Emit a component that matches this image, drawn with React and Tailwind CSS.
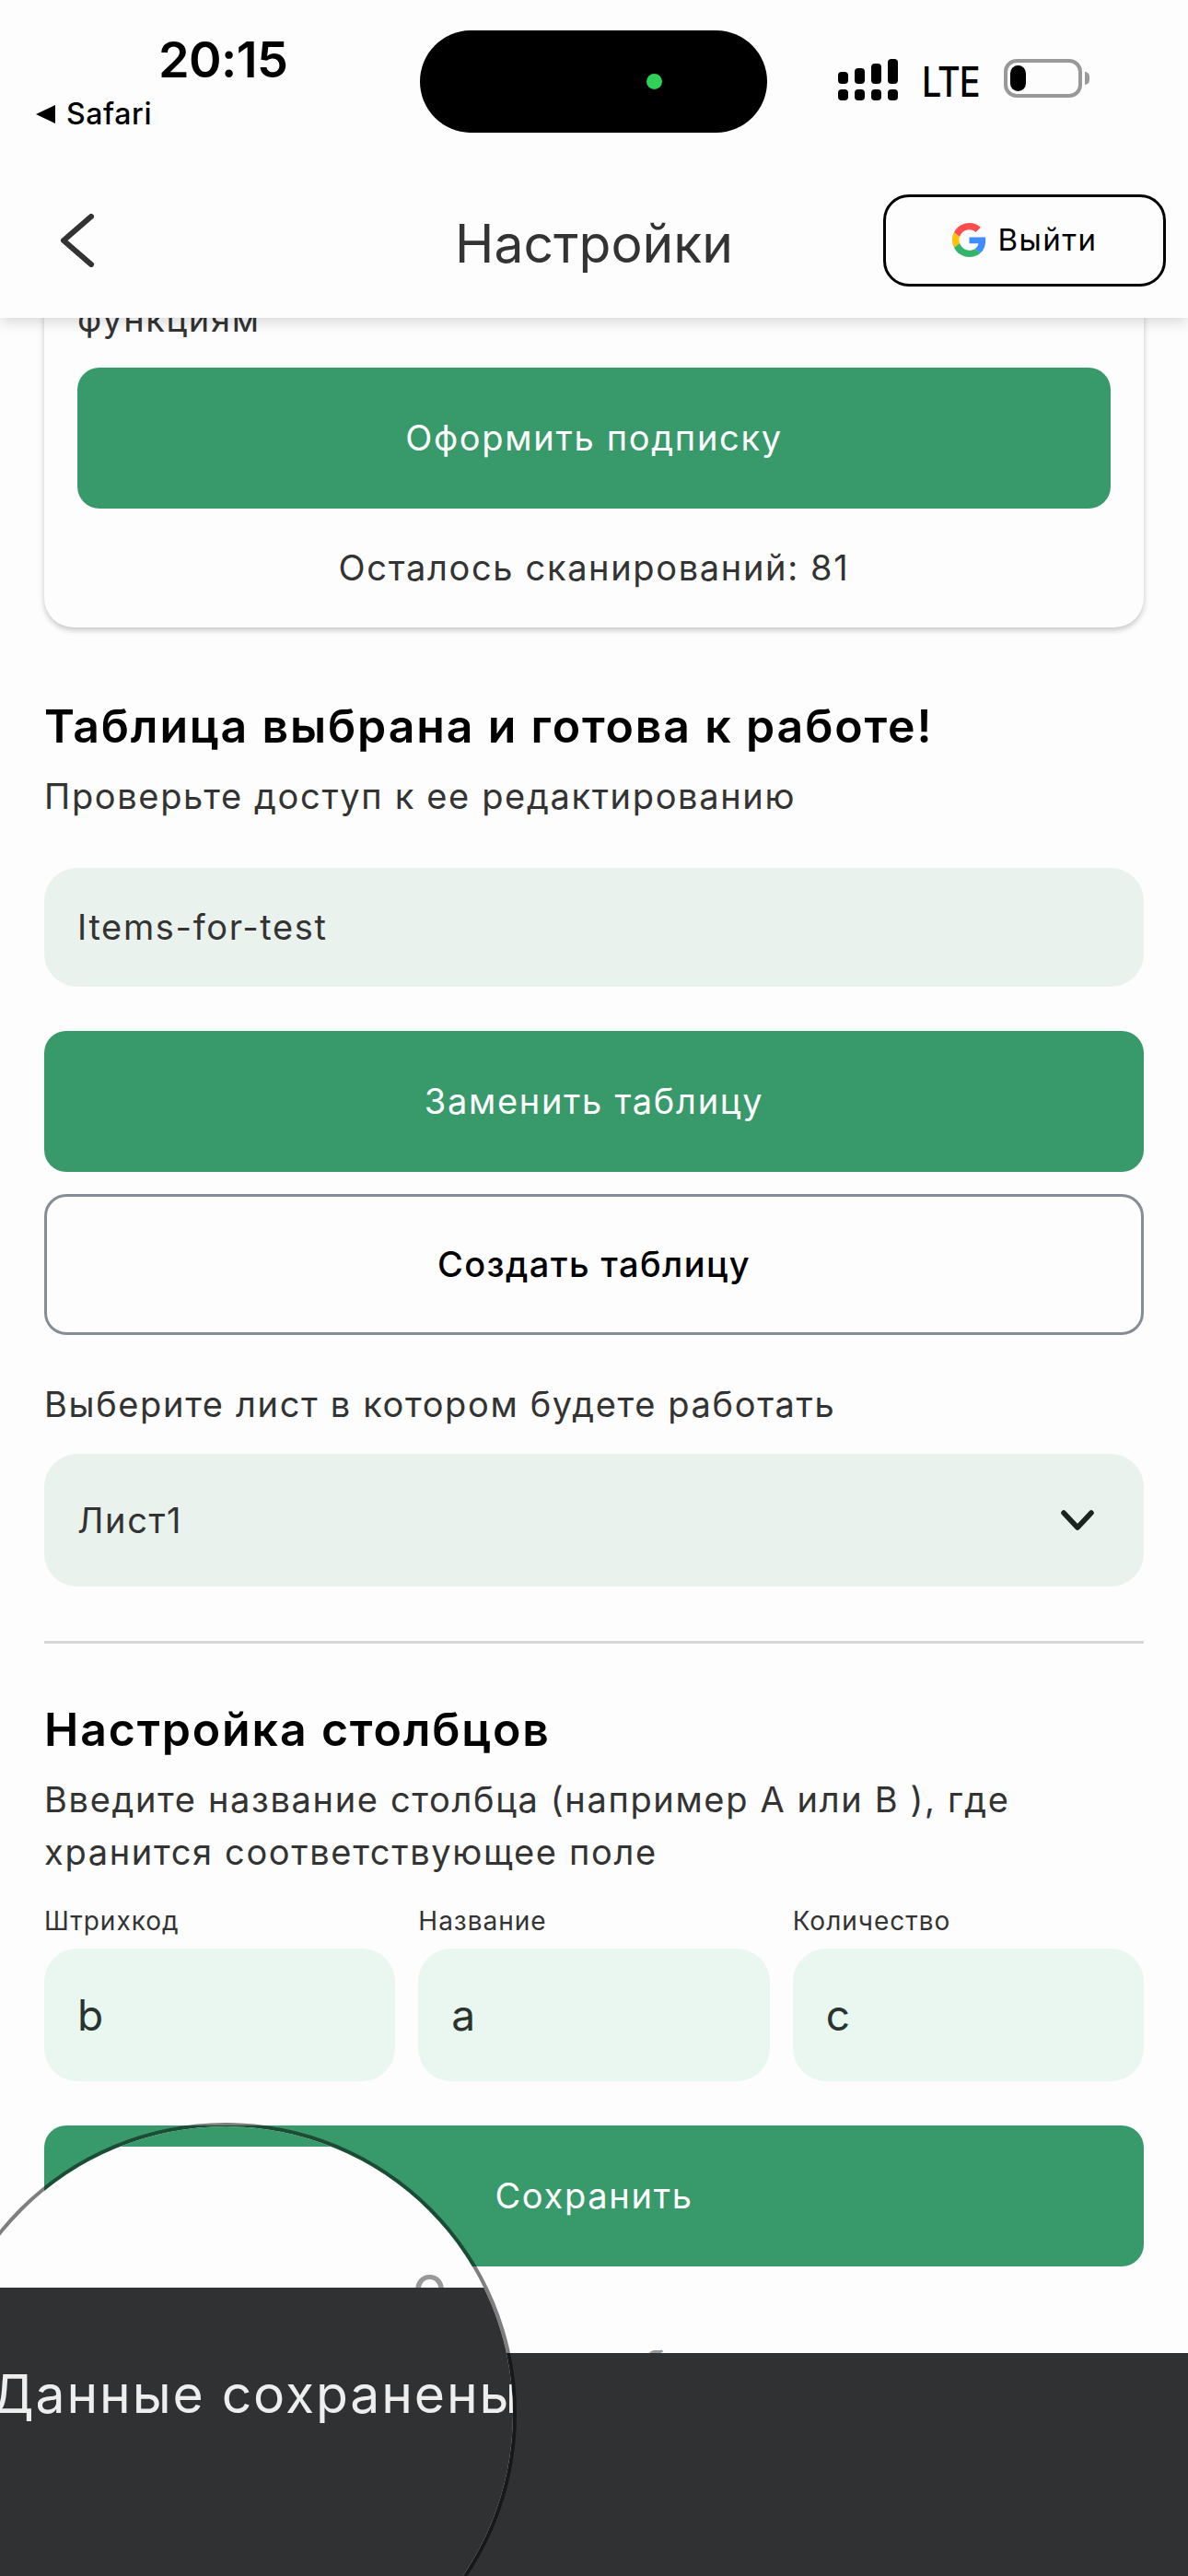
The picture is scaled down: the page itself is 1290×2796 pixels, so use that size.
import React from 'react';

const signalBars = ['h-[13px]', 'h-[17px]', 'h-[22px]', 'h-[27px]'];

const GoogleIcon = () => (
  <svg width="37" height="37" viewBox="0 0 48 48" className="shrink-0">
    <path fill="#FFC107" d="M10.53 28.59A14.5 14.5 0 0 1 9.5 24c0-1.6.28-3.15.76-4.59l-7.98-6.19A24 24 0 0 0 0 24c0 3.88.92 7.54 2.56 10.78z" />
    <path fill="#FF4D4D" d="M24 9.5c3.54 0 6.71 1.22 9.21 3.6l6.85-6.85C35.9 2.38 30.47 0 24 0 14.62 0 6.51 5.38 2.56 13.22l7.98 6.19C12.43 13.72 17.74 9.5 24 9.5z" />
    <path fill="#3F8CFF" d="M46.98 24.55c0-1.57-.15-3.09-.38-4.55H24v9.02h12.94c-.58 2.96-2.26 5.48-4.78 7.18l7.73 6c4.51-4.18 7.09-10.36 7.09-17.65z" />
    <path fill="#34B36B" d="M24 48c6.48 0 11.93-2.13 15.89-5.81l-7.73-6c-2.15 1.45-4.92 2.3-8.16 2.3-6.26 0-11.57-4.22-13.47-9.91l-7.98 6.19C6.51 42.62 14.62 48 24 48z" />
  </svg>
);

const StatusBar = () => (
  <div className="h-[176px] flex items-start">
    <div className="w-[456px] shrink-0 pt-[34px]">
      <div className="pl-[172px] text-[54px] leading-[62px] font-semibold text-black tracking-[-0.6px]">20:15</div>
      <div className="mt-[10px] pl-[38px] flex items-center gap-[11px] text-black">
        <svg width="23" height="22" viewBox="0 0 23 22"><path d="M22 1v20L1 11z" fill="#000" /></svg>
        <span className="text-[32px] leading-[36px] font-medium tracking-[0.6px]">Safari</span>
      </div>
    </div>
    <div className="mt-[33px] w-[377px] h-[111px] rounded-full bg-black shrink-0 flex items-center justify-end pr-[114px]">
      <div className="w-[17px] h-[17px] rounded-full bg-[#30d158]"></div>
    </div>
    <div className="mt-[64px] ml-[77px] flex items-start">
      <div className="w-[65px] flex justify-between">
        {signalBars.map((h, i) => (
          <div key={i} className="w-[11px] h-[45px] flex flex-col justify-end gap-[6px]">
            <div className={`${h} w-full rounded-[4px] bg-black`}></div>
            <div className="h-[12px] w-full rounded-[4px] bg-black"></div>
          </div>
        ))}
      </div>
      <div className="ml-[26px] w-[62px] mt-[3px] text-[45px] leading-[44px] font-medium text-black scale-x-[.84] origin-left tracking-[-1px]">LTE</div>
      <div className="ml-[27px] w-[85px] h-[42px] rounded-[14px] border-[4px] border-[#999999] p-[3px]">
        <div className="w-[17px] h-full rounded-full bg-black"></div>
      </div>
      <div className="ml-[3px] mt-[14px] w-[5px] h-[14px] rounded-r-full bg-[#999999]"></div>
    </div>
  </div>
);

const Header = () => (
  <header className="relative z-10 h-[345px] bg-[#fdfdfd] shadow-[0_5px_14px_rgba(0,0,0,0.14)]">
    <StatusBar />
    <div className="h-[169px] grid grid-cols-[1fr_auto_1fr] items-center">
      <div className="pl-[66px]">
        <svg width="36" height="58" viewBox="0 0 36 58" fill="none">
          <path d="M33 3 3 29l30 26" stroke="#333333" strokeWidth="6" strokeLinecap="round" strokeLinejoin="round" />
        </svg>
      </div>
      <h1 className="text-[57px] leading-[70px] mt-[8px] text-[#333333]">Настройки</h1>
      <div className="flex justify-end pr-[24px]">
        <button className="w-[307px] h-[100px] rounded-[28px] border-[3px] border-black flex items-center justify-center gap-[13px] text-[33px] tracking-[1.4px] text-black">
          <GoogleIcon />
          Выйти
        </button>
      </div>
    </div>
  </header>
);

const Magnifier = () => (
  <div className="absolute left-[-71px] top-[2304px] z-30 w-[632px] h-[632px] rounded-full border-[4px] border-black/50 bg-[#fdfdfd] bg-clip-padding overflow-hidden">
    <div className="absolute left-[115px] top-0 w-[600px] h-[22px] rounded-tl-[24px] bg-[#38996a]"></div>
    <span className="absolute left-[515px] top-[138px] text-[62px] leading-[70px] text-[#999999]">о</span>
    <div className="absolute left-0 right-0 top-[175px] bottom-0 bg-[#303133]"></div>
    <span className="absolute left-[57px] top-[253px] text-[57px] leading-[76px] tracking-[1.9px] text-[#eeeeee] whitespace-nowrap">Данные сохранены</span>
  </div>
);

const App = () => {
  const bodyText = 'text-[38px] leading-[50px] tracking-[1.65px] text-[#333333]';
  const headingText = 'text-[50px] leading-[60px] font-semibold tracking-[1.85px] text-black';
  const greenBtn = 'w-full h-[153px] rounded-[24px] bg-[#38996a] flex items-center justify-center text-[38px] tracking-[1.7px] text-white';

  return (
    <div className="relative w-[1290px] h-[2796px] overflow-hidden bg-[#fdfdfd] font-[Inter,sans-serif]">
      <Header />

      <main className="px-[48px]">
        <section className="-mt-[42px] pt-[18px] px-[36px] pb-[40px] rounded-b-[32px] bg-[#fdfdfd] shadow-[0_3px_6px_rgba(0,0,0,0.22)]">
          <p className={bodyText}>функциям</p>
          <button className={`${greenBtn} mt-[28px]`}>Оформить подписку</button>
          <p className={`${bodyText} mt-[39px] text-center`}>Осталось сканирований: 81</p>
        </section>

        <h2 className={`${headingText} mt-[77px]`}>Таблица выбрана и готова к работе!</h2>
        <p className={`${bodyText} mt-[21px]`}>Проверьте доступ к ее редактированию</p>

        <div className={`mt-[53px] h-[129px] rounded-[36px] bg-[#e9f2ec] px-[36px] pb-[2px] flex items-center ${bodyText}`}>Items-for-test</div>

        <button className={`${greenBtn} mt-[48px]`}>Заменить таблицу</button>
        <button className="mt-[24px] w-full h-[153px] rounded-[24px] border-[3px] border-[#858e96] flex items-center justify-center text-[38px] tracking-[1.4px] font-medium text-black">
          Создать таблицу
        </button>

        <p className={`${bodyText} mt-[50px]`}>Выберите лист в котором будете работать</p>
        <div className={`mt-[29px] h-[144px] rounded-[36px] bg-[#e9f2ec] pl-[36px] pr-[54px] flex items-center justify-between ${bodyText}`}>
          <span>Лист1</span>
          <svg width="36" height="24" viewBox="0 0 36 24" fill="none">
            <path d="M3 4l15 16L33 4" stroke="#1c2420" strokeWidth="5.5" strokeLinecap="round" strokeLinejoin="round" />
          </svg>
        </div>

        <div className="mt-[59px] h-[3px] bg-[#d6d6d6]"></div>

        <h2 className={`${headingText} mt-[63px]`}>Настройка столбцов</h2>
        <p className="mt-[18px] text-[38px] leading-[57px] tracking-[1.65px] text-[#333333]">
          Введите название столбца (например A или B ), где
          <br />
          хранится соответствующее поле
        </p>

        <div className="mt-[28px] grid grid-cols-3 gap-x-[25px]">
          {[['Штрихкод', 'b'], ['Название', 'a'], ['Количество', 'c']].map(([label, value]) => (
            <div key={label}>
              <div className="text-[28px] leading-[36px] tracking-[1px] text-[#333333]">{label}</div>
              <div className="mt-[12px] h-[144px] rounded-[36px] bg-[#e9f7f0] pl-[36px] flex items-center text-[46px] text-[#2a332e]">{value}</div>
            </div>
          ))}
        </div>

        <button className={`${greenBtn} mt-[48px]`}>Сохранить</button>

        <p className="mt-[80px] ml-[652px] text-[38px] leading-[50px] text-[#999999]">б</p>
      </main>

      <div className="absolute left-0 right-0 bottom-0 z-20 h-[242px] bg-[#303133]"></div>
      <Magnifier />
    </div>
  );
};

export default App;
